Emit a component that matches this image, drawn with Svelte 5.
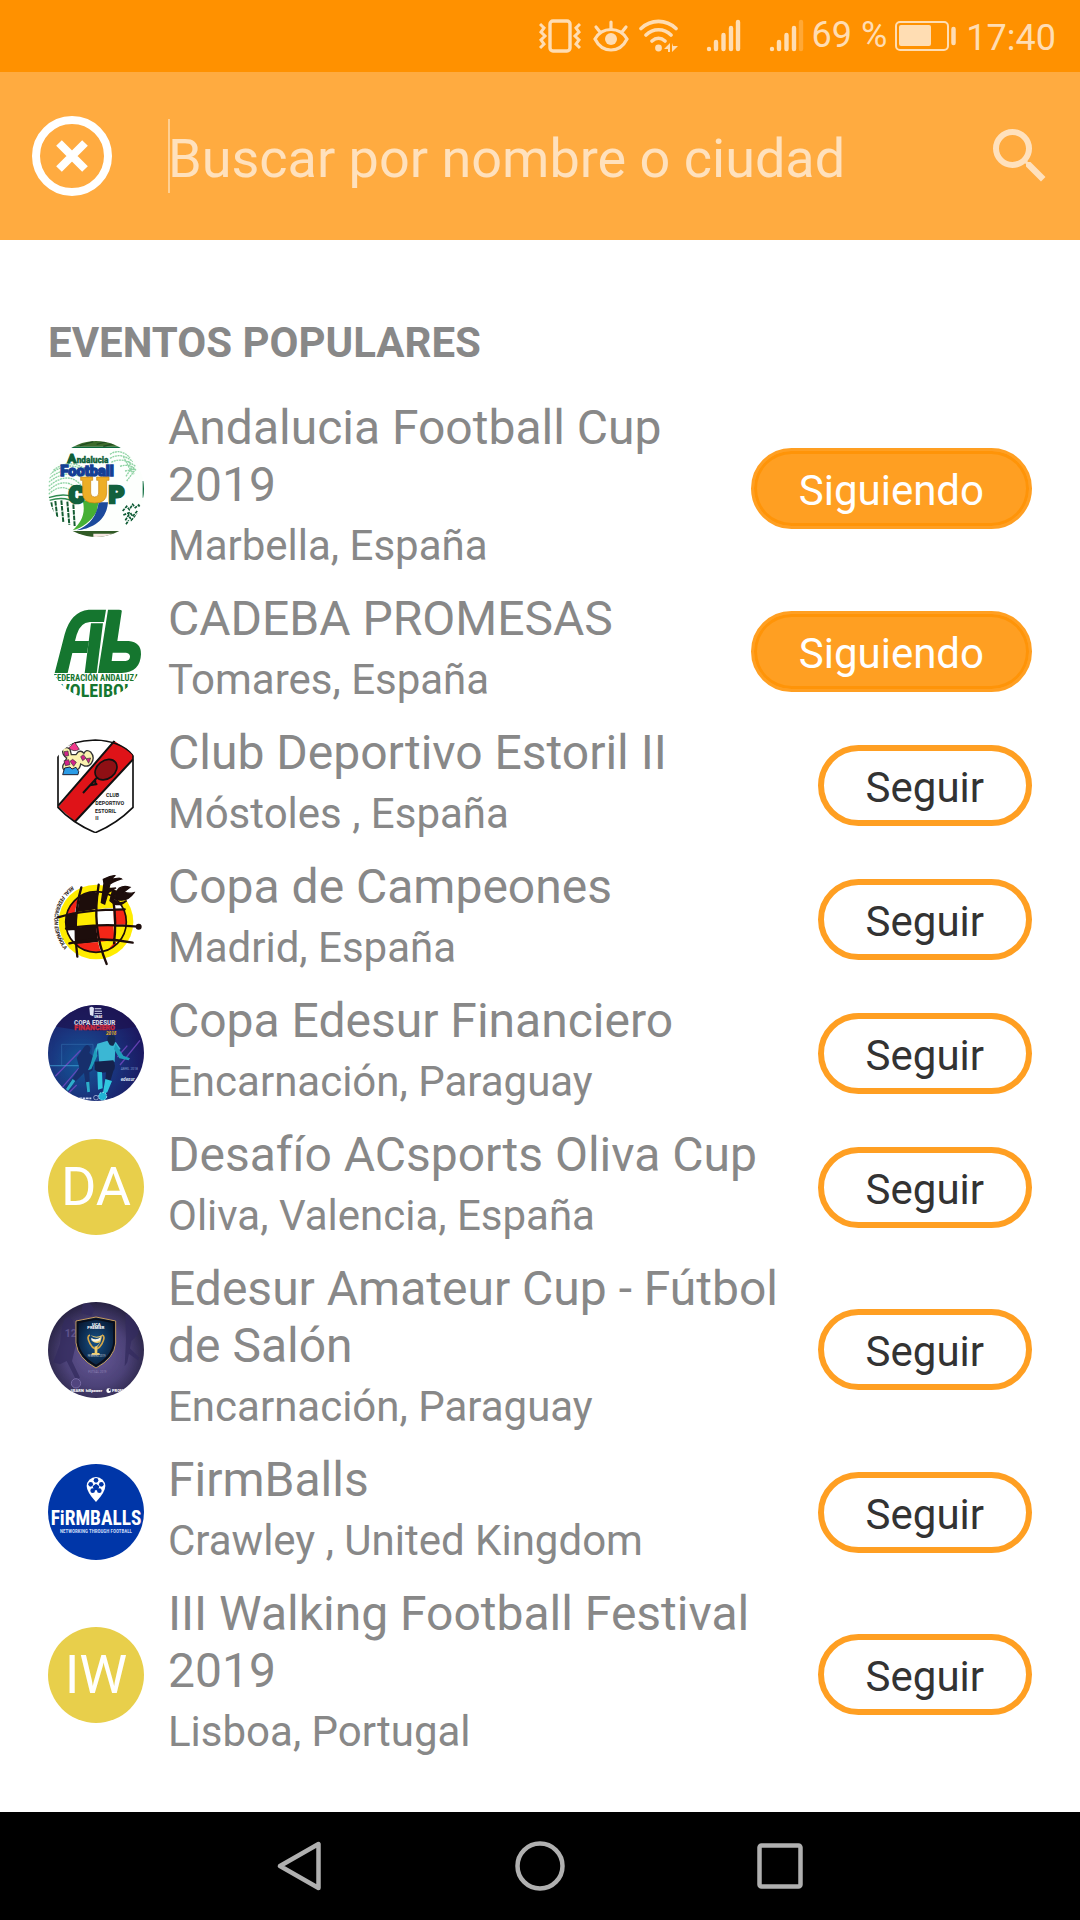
<script>
    let query = $state('');

    let events = $state([
        { name: 'Andalucia Football Cup 2019', place: 'Marbella, España', logo: 'andalucia', following: true },
        { name: 'CADEBA PROMESAS', place: 'Tomares, España', logo: 'cadeba', following: true },
        { name: 'Club Deportivo Estoril II', place: 'Móstoles , España', logo: 'estoril', following: false },
        { name: 'Copa de Campeones', place: 'Madrid, España', logo: 'campeones', following: false },
        { name: 'Copa Edesur Financiero', place: 'Encarnación, Paraguay', logo: 'edesur', following: false },
        { name: 'Desafío ACsports Oliva Cup', place: 'Oliva, Valencia, España', initials: 'DA', following: false },
        { name: 'Edesur Amateur Cup - Fútbol de Salón', place: 'Encarnación, Paraguay', logo: 'amateur', following: false },
        { name: 'FirmBalls', place: 'Crawley , United Kingdom', logo: 'firmballs', following: false },
        { name: 'III Walking Football Festival 2019', place: 'Lisboa, Portugal', initials: 'IW', following: false }
    ]);
</script>

<div class="screen">
    <div class="status">
        <svg class="vibrate" width="42" height="34" viewBox="0 0 42 34" fill="none" stroke="currentColor">
            <rect x="11" y="2" width="20" height="30" rx="3" stroke-width="3.4" />
            <path d="M1 5l4 4-3 4 4 4-4 4 3 4-4 4M41 5l-4 4 3 4-4 4 4 4-3 4 4 4" stroke-width="3" />
        </svg>
        <svg class="eye" width="36" height="34" viewBox="0 0 36 34" fill="none" stroke="currentColor" stroke-width="3.2" stroke-linecap="round">
            <path d="M2 20C6 13 12 10.500 18 10.500S30 13 34 20C30 28 24 31 18 31S6 28 2 20Z" />
            <path d="M18 3v7M3 8l4 5M33 8l-4 5" />
            <circle cx="18" cy="20" r="6" fill="currentColor" stroke="none" />
        </svg>
        <svg class="wifi" width="39" height="34" viewBox="0 0 39 34" fill="none" stroke="currentColor" stroke-width="3.600" stroke-linecap="round">
            <path d="M2 9.500C12 0 27 0 37 9.500M7 16c7-7 18-7 25 0M13 22c4-3.600 9-3.600 13 0" />
            <circle cx="19.500" cy="29" r="3.400" fill="currentColor" stroke="none" />
            <path d="M31 24v9h-2v-3h-4zM33 33v-9l1 3h5z" fill="currentColor" stroke="none" />
        </svg>
        <svg class="signal" width="35" height="34" viewBox="0 0 35 34" stroke="currentColor" stroke-width="4.400" stroke-linecap="round">
            <path d="M3 30v0M10 23v7M17.500 16v14M25 9v21M32 3v27" />
        </svg>
        <svg class="signal" width="35" height="34" viewBox="0 0 35 34" stroke="currentColor" stroke-width="4.400" stroke-linecap="round">
            <path d="M3 30v0M10 23v7M17.500 16v14M25 9v21" />
            <path d="M32 3v27" opacity=".3" />
        </svg>
        <span class="percent">69 %</span>
        <svg class="battery" width="62" height="30" viewBox="0 0 62 30" fill="none" stroke="currentColor">
            <rect x="1" y="1" width="52" height="28" rx="4" stroke-width="2" />
            <rect x="4" y="4" width="32" height="21" rx="2" fill="currentColor" stroke="none" />
            <path d="M58.500 8v14" stroke-width="4.500" stroke-linecap="round" />
        </svg>
        <span class="clock">17:40</span>
    </div>

    <header class="searchbar">
        <button class="close" aria-label="Cerrar" onclick={() => (query = '')}>
            <svg width="80" height="80" viewBox="0 0 80 80" fill="none" stroke="currentColor">
                <circle cx="40" cy="40" r="36" stroke-width="8" />
                <path d="M27 27l26 26M53 27L27 53" stroke-width="8" />
            </svg>
        </button>
        <input type="text" aria-label="Buscar" placeholder="Buscar por nombre o ciudad" bind:value={query} />
        <button class="find" aria-label="Buscar">
            <svg width="72" height="72" viewBox="0 0 24 24" fill="currentColor">
                <path d="M15.500 14h-.79l-.28-.27A6.471 6.471 0 0 0 16 9.500 6.500 6.500 0 1 0 9.500 16c1.610 0 3.090-.59 4.230-1.570l.27.28v.79l5 4.990L20.490 19l-4.990-5zm-6 0C7.010 14 5 11.990 5 9.500S7.010 5 9.500 5 14 7.010 14 9.500 11.990 14 9.500 14z" />
            </svg>
        </button>
    </header>

    <main>
        <h1>EVENTOS POPULARES</h1>
        <ul>
            {#each events as event}
                <li>
                    {#if event.initials}
                        <div class="avatar initials">{event.initials}</div>
                    {:else}
                        <div class="avatar">{@render logo(event.logo)}</div>
                    {/if}
                    <div class="info">
                        <h2>{event.name}</h2>
                        <p>{event.place}</p>
                    </div>
                    <button class="follow" class:following={event.following} onclick={() => (event.following = !event.following)}>
                        {event.following ? 'Siguiendo' : 'Seguir'}
                    </button>
                </li>
            {/each}
        </ul>
    </main>

    <nav>
        <button aria-label="Atrás">
            <svg width="50" height="50" viewBox="0 0 50 50"><path d="M5 25L43.500 3v44z" stroke-linejoin="round" /></svg>
        </button>
        <button aria-label="Inicio">
            <svg width="50" height="50" viewBox="0 0 50 50"><circle cx="25" cy="25" r="22.500" /></svg>
        </button>
        <button aria-label="Recientes">
            <svg width="50" height="50" viewBox="0 0 50 50"><rect x="4.500" y="4.500" width="41" height="41" rx="2" /></svg>
        </button>
    </nav>
</div>

{#snippet logo(kind)}
    {#if kind === 'andalucia'}
        <svg viewBox="54 30 288 288">
            <rect x="54" y="30" width="288" height="288" fill="#fdfffd" />
            <path d="M100 30h200v17H100z" fill="#3c6b2b" />
            <path d="M100 47h200v4H100z" fill="#0b6a3c" />
            <path d="M200 40l30-8M150 44l40-12M220 46l40-10" stroke="#1f4a20" stroke-width="4" />
            <g fill="none" stroke="#8fd3a4" stroke-width="4" stroke-dasharray="6 2">
                <path d="M60 130q60-50 120 0M58 142q60-50 120 0M56 154q60-50 120 0M56 166q60-50 100 0M56 178q50-45 90 0M70 118q50-40 100 0M56 190q40-40 80 0" />
                <path d="M240 70q30-20 60 10M240 82q34-20 68 10M244 94q34-18 72 12M270 106q30-10 48 12M285 120l30-6M288 136l20-30M290 150l26-34M296 90l16 40M280 76l26 50" />
            </g>
            <path d="M56 200q60-20 90 10M58 208q50-15 80 10" fill="none" stroke="#2f8a50" stroke-width="4" />
            <g stroke="#145c32" stroke-width="6" stroke-dasharray="14 3">
                <path d="M76 210l6 50M94 208l6 66M112 212l6 70M130 220l4 66M64 214l4 30" />
            </g>
            <path d="M158 208c10 40-4 66-30 90 30-8 56-28 72-56l6-30z" fill="#46b035" />
            <path d="M206 214c-6 44-30 70-66 84 44-4 90-28 94-84z" fill="#1c4a9c" />
            <g fill="#0c5f38" stroke="#0c5f38" font-weight="900">
                <text x="112" y="97" font-size="40" stroke-width="3">A</text>
                <text x="140" y="97" font-size="25" stroke-width="1">ndalucia</text>
            </g>
            <text x="91" y="136" font-size="44" font-weight="900" fill="#153f94" stroke="#153f94" stroke-width="4">Football</text>
            <g fill="#12603d" stroke="#12603d" stroke-width="8" font-weight="900">
                <text x="116" y="216" font-size="72">C</text>
                <text x="236" y="217" font-size="72">P</text>
            </g>
            <path d="M152 138h36v10h-6v38q0 12 12 12t12-12v-38h-6v-10h37v10h-7v38q0 30-36 30t-36-30v-38h-6z" fill="#eeae26" stroke="#c98512" stroke-width="2" />
            <path d="M278 240l12-14 8 10 10-16 8 10 10-8 4 6M280 252l20-8 8 12 14-16M286 268l10-16 8 16 20-20M288 280l8-12" fill="none" stroke="#0d5a34" stroke-width="5" stroke-dasharray="9 3" />
            <path d="M338 150h4v50h-4z" fill="#0b6a3c" />
            <path d="M100 300h190v18H100z" fill="#315a26" />
            <path d="M190 308h60v10h-60z" fill="#f6e6e2" />
        </svg>
    {:else if kind === 'cadeba'}
        <svg viewBox="54 36 288 288">
            <rect x="54" y="36" width="288" height="288" fill="#fff" />
            <g fill="#15762f">
                <path d="M74 246l30-116q18-68 72-74h52l-6 37h-42q-30 2-40 38l-5 19h42l-6 36h-44l-14 60z" />
                <path d="M183 97h36l-19 149h-36z" />
                <path d="M234 56h42l-14 94h34q38 4 37 40-2 54-58 56h-71zM248 185l-3 25h42q12-2 13-13 0-11-12-12z" fill-rule="evenodd" />
                <text class="narrow" x="198" y="271" font-size="26" font-weight="700" text-anchor="middle">FEDERACIÓN ANDALUZA</text>
                <text class="narrow" x="198" y="318" font-size="54" font-weight="700" text-anchor="middle">VOLEIBOL</text>
            </g>
        </svg>
    {:else if kind === 'estoril'}
        <svg viewBox="54 33 288 288">
            <rect x="54" y="33" width="288" height="288" fill="#fff" />
            <path d="M84 74q40-30 112-32 72 2 113 44v158q-50 50-113 76-70-30-112-76z" fill="#fff" />
            <path d="M252 44l57 40v16L136 287l-51-44z" fill="#df1318" />
            <path d="M85 239L254 44M134 288L309 100" stroke="#111" stroke-width="6" />
            <path d="M84 74q40-30 112-32 72 2 113 44v158q-50 50-113 76-70-30-112-76z" fill="none" stroke="#111" stroke-width="5" />
            <ellipse cx="228" cy="131" rx="36" ry="27" transform="rotate(-38 228 131)" fill="#8f0f14" stroke="#111" stroke-width="5" />
            <path d="M201 155l-42 46M197 178l-2-20M180 178l22-4" stroke="#111" stroke-width="6" />
            <path d="M98 70q10-10 22 0l4 16h14l6-8q10-6 18 4 6-14 20-4 14 16 2 34-6 10-20 8l-12-6q-2 18-18 20h-30q-12-10 0-24l6-14q-14-8-12-26z" fill="#fbf2b0" stroke="#333" stroke-width="4" />
            <path d="M116 66l18-17 14 21q-16 10-32-4z" fill="#f23a8c" stroke="#222" stroke-width="2" />
            <path d="M102 77l12-2 2 14-12 2zM102 104l14-3 4 15-14 3zM120 106l8-6 11 9-8 12zM152 92l8-6 8 10-10 8zM168 98l14-2-6 16z" fill="#d3238a" stroke="#333" stroke-width="2" />
            <path d="M104 126l16-3 6 6 12-5 8 12-2 10H98z" fill="#2a9be6" stroke="#223" stroke-width="3" />
            <g fill="#222" font-size="16" font-weight="700">
                <text x="228" y="214">CLUB</text>
                <text x="196" y="238">DEPORTIVO</text>
                <text x="195" y="261">ESTORIL</text>
                <text x="196" y="282">II</text>
            </g>
        </svg>
    {:else if kind === 'campeones'}
        <svg viewBox="54 33 288 288">
            <defs>
                <clipPath id="ball"><circle cx="198" cy="186" r="91" /></clipPath>
                <path id="ring" d="M126 78A132 132 0 0 0 204 316" />
            </defs>
            <rect x="54" y="33" width="288" height="288" fill="#fff" />
            <circle cx="198" cy="186" r="112" fill="#ffec00" />
            <g clip-path="url(#ball)">
                <rect x="100" y="90" width="200" height="200" fill="#fff" />
                <path d="M100 80l50 10-16 68-34 6zM206 230l50 10 10 40-50 10z" fill="#f52617" />
                <path d="M152 90l56 8-10 50-56 10zM108 162l34-6-6 54-28 2zM134 204l64-8 6 50-66 8z" fill="#1d0d0b" />
                <path d="M142 156l56-8v48l-60 4zM206 100l50-8-6 52-52 4zM250 194l46 6-30 50-14-8z" fill="#ffec00" />
                <path d="M198 148l52-4 2 50-54 2z" fill="#fff" />
                <path d="M250 146l40 4v44h-38zM198 198h52l4 42-50 4zM138 252l66-6 8 30-52 4z" fill="#f52617" />
                <path d="M106 212h28l4 40-30-14z" fill="#fff" />
                <path d="M204 246l56-6-40 44z" fill="#ffec00" />
            </g>
            <circle cx="198" cy="186" r="91" fill="none" stroke="#1d0d0b" stroke-width="5" />
            <g fill="none" stroke="#1d0d0b" stroke-width="7" stroke-linecap="round">
                <path d="M154 82q-26 90-12 208M206 74q-22 130 24 238M250 120q10 70 2 130M84 172q80-24 200-24M108 206q100-18 216-6M118 250q90-22 190-2" />
            </g>
            <circle cx="326" cy="200" r="9" fill="#1d0d0b" />
            <path d="M220 58q20-10 36-12-8 8-14 12 30-6 44-4-30 6-46 18l-4 14 22-2-24 14-10 34-10-4 8-58zM268 84q-26 30 0 36 26 4 44-22-16 4-30-2 10-8 18-14-18-6-32 2zM248 90l12 4-10 24q18 18 40 4-26 24-50 0z" fill="#1d0d0b" stroke="#1d0d0b" stroke-width="4" />
            <text font-size="16" font-weight="700" font-style="italic" fill="#2a1a18"><textPath href="#ring">REAL FEDERACIÓN ESPAÑOLA</textPath></text>
        </svg>
    {:else if kind === 'edesur'}
        <svg viewBox="54 30 288 288">
            <defs>
                <radialGradient id="stage" cx=".35" cy=".6" r=".65">
                    <stop offset="0" stop-color="#145a9a" />
                    <stop offset=".5" stop-color="#1a3780" />
                    <stop offset="1" stop-color="#1c1a62" />
                </radialGradient>
            </defs>
            <rect x="54" y="30" width="288" height="288" fill="url(#stage)" />
            <path d="M54 30h288v60q-140 34-288 0z" fill="#1c1350" opacity=".7" />
            <path d="M95 210v-62h94v60" fill="none" stroke="#3d7cba" stroke-width="2" opacity=".7" />
            <path d="M76 244l76-78M86 290l60-70M270 210l60-74M262 186l30-34M110 300l30-30" stroke="#7549c4" stroke-width="4" opacity=".8" />
            <path d="M54 212h120" stroke="#4bb8e6" stroke-width="4" opacity=".5" />
            <path d="M164 154q12-10 18 6l-4 14 14 12-4 40-10 6 2 50-10 4-8-52-30 30-18 22-8-6 28-40 14-22-8-30z" fill="#172f6c" />
            <path d="M108 282l20-30 8 6-22 30zM168 262l10-2 2 30-8 2z" fill="#2daecb" />
            <path d="M202 146l28-8 28 4 14 20-10 6-6-8-2 40-46 6-4-46-8 30-6-4z" fill="#3bb7d4" />
            <path d="M256 146l24 36 20 8-4 6-28-6-16-28zM196 156l-14 50-8 20 10-4 18-40z" fill="#209ebb" />
            <path d="M232 134q0-14 12-14t12 12-6 20q-12 4-18-18z" fill="#14284d" />
            <path d="M194 200l56-4q10 20 0 32l-10 34-14-4 2-26-20 2-14-10z" fill="#15224d" />
            <path d="M202 230l14 2 2 48-14 4zM226 252l20 6-14 34-14 6z" fill="#31c7df" />
            <circle cx="218" cy="304" r="12" fill="#20b3d5" stroke="#9ce8f5" stroke-width="3" stroke-dasharray="5 4" />
            <path d="M178 38q10-6 14 2l-2 24-10-4zM194 40h20v3h-20zM194 47h22v3h-22zM194 54h22v2h-22z" fill="#dfe5f5" />
            <g font-weight="900">
                <text x="193" y="70" font-size="9" fill="#fff">UNAE</text>
                <text x="132" y="90" font-size="19" fill="#d5d5e3">COPA EDESUR</text>
                <text x="133" y="106" font-size="21" fill="#c72b3e" stroke="#c72b3e">FINANCIERO</text>
                <text x="228" y="119" font-size="14" font-style="italic" fill="#d9a428">2018</text>
            </g>
            <text x="272" y="224" font-size="10" fill="#7b9ad0">ABRIL 2018</text>
            <text x="272" y="258" font-size="14" font-style="italic" font-weight="700" fill="#dfe5f5">edesur</text>
            <circle cx="198" cy="308" r="7" fill="none" stroke="#c8d2ee" stroke-width="2" />
            <path d="M148 310h36" stroke="#c8d2ee" stroke-width="5" stroke-dasharray="8 2" />
        </svg>
    {:else if kind === 'amateur'}
        <svg viewBox="54 33 288 288">
            <defs>
                <radialGradient id="violet" cx=".5" cy=".55" r=".55">
                    <stop offset="0" stop-color="#685a98" />
                    <stop offset=".6" stop-color="#4c4278" />
                    <stop offset="1" stop-color="#282343" />
                </radialGradient>
                <radialGradient id="shield" cx=".5" cy=".5" r=".6">
                    <stop offset="0" stop-color="#17538a" />
                    <stop offset="1" stop-color="#06142c" />
                </radialGradient>
            </defs>
            <rect x="54" y="33" width="288" height="288" fill="url(#violet)" />
            <g fill="#332b5e" opacity=".75">
                <path d="M104 84q14-12 24 4l8 20 2 52-12 50 24 50-12 6-28-56-20 10-20-6 20-56 6-50z" />
                <path d="M158 36q20-10 36 20l-10 20-30-10zM286 70l20-20 28 20-10 60-20 20-12 64-8 12 4-80z" />
                <path d="M298 170l30 30-4 8-34-24z" />
            </g>
            <circle cx="138" cy="277" r="14" fill="#51457f" stroke="#756aa3" stroke-width="3" />
            <text x="104" y="138" font-size="32" font-weight="700" fill="#5d528c">12</text>
            <path d="M198 78q30 6 59 12v66q-4 46-59 75-55-29-60-75V90q30-6 60-12z" fill="url(#shield)" stroke="#c79b5d" stroke-width="3" />
            <path d="M198 84q28 5 54 10v60q-4 42-54 70-50-28-55-70V94z" fill="none" stroke="#0a0d18" stroke-width="5" />
            <g fill="none" stroke="#d7a747" stroke-width="5">
                <path d="M180 132q-12 4 0 26 6 12 16 16M216 132q12 4 0 26-6 12-16 16" />
            </g>
            <path d="M182 132q10 12 30 6-6 12-26 12 12 10 24 4-8 14-16 12v20h-8l-2 6h26l-2-6h-6v-18q12-14 14-36-16 10-34 0z" fill="#f0cd6c" />
            <path d="M184 140q14 10 28-2l-2 10q-14 8-26 0z" fill="#f8f5e6" />
            <g font-weight="900" fill="#fff">
                <text x="186" y="104" font-size="13">UCA</text>
                <text x="172" y="114" font-size="12">PREMIER</text>
                <text x="122" y="304" font-size="12">UEARN</text>
                <text x="167" y="304" font-size="12">hillpower</text>
                <text x="246" y="304" font-size="12">PROM</text>
            </g>
            <text x="173" y="199" font-size="8" fill="#c3cad8">FEBRERO 2019</text>
            <text x="175" y="246" font-size="9" fill="#9186b5">FUTSAL 2019</text>
            <circle cx="236" cy="299" r="7" fill="#fff" />
            <circle cx="239" cy="297" r="3" fill="#2b2648" />
        </svg>
    {:else if kind === 'firmballs'}
        <svg viewBox="54 522 288 288">
            <rect x="54" y="522" width="288" height="288" fill="#0036a8" />
            <path d="M198 636q-28-30-28-48a28 27 0 0 1 56 0q0 18-28 48z" fill="#fff" />
            <g fill="#0036a8">
                <path d="M198 581l10 8-4 12h-12l-4-12z" />
                <circle cx="198" cy="571" r="7" />
                <circle cx="214" cy="583" r="7" />
                <circle cx="208" cy="602" r="7" />
                <circle cx="188" cy="602" r="7" />
                <circle cx="182" cy="583" r="7" />
            </g>
            <text class="narrow" x="198" y="705" font-size="58" font-weight="700" fill="#fff" text-anchor="middle">FiRMBALLS</text>
            <text class="narrow" x="198" y="729" font-size="15" font-weight="700" fill="#c4d5f5" text-anchor="middle">NETWORKING THROUGH FOOTBALL</text>
        </svg>
    {/if}
{/snippet}

<style>
    :global(body) {
        margin: 0;
        background: #fff;
        font-family: Roboto, sans-serif;
    }
    .screen {
        display: flex;
        flex-direction: column;
        min-height: 100vh;
    }
    button {
        padding: 0;
        border: 0;
        background: none;
        color: inherit;
        font-family: inherit;
        cursor: pointer;
    }
    svg {
        display: block;
        flex: none;
    }

    .status {
        display: flex;
        align-items: center;
        justify-content: flex-end;
        height: 72px;
        padding-right: 24px;
        background: #ff9100;
        color: #ffddb3;
        font-size: 36px;
        line-height: 42px;
    }
    .eye {
        margin-left: 12px;
    }
    .wifi {
        margin-left: 10px;
    }
    .signal {
        margin-left: 28px;
    }
    .percent {
        margin: 0 8px 2px;
    }
    .clock {
        margin: 4px 0 0 9px;
    }

    .searchbar {
        display: flex;
        align-items: center;
        height: 168px;
        padding: 0 24px 0 32px;
        box-sizing: border-box;
        background: #ffab40;
    }
    .close {
        color: #fff;
    }
    .find {
        color: #ffe1bd;
    }
    input {
        flex: 1;
        min-width: 0;
        height: 74px;
        margin: 0 24px 0 56px;
        padding: 4px 0 0;
        box-sizing: border-box;
        border: 0;
        outline: 0;
        /* thin caret line at the start of the field */
        background: linear-gradient(#ffd093, #ffd093) left / 2px 100% no-repeat;
        color: #fff;
        font-family: inherit;
        font-size: 54px;
    }
    input::placeholder {
        color: #ffe1bd;
        opacity: 1;
    }

    main {
        flex: 1;
        padding: 78px 48px 40px;
        color: #888;
    }
    h1 {
        margin: 0 0 26px;
        font-size: 42px;
        font-weight: 700;
        line-height: 49px;
    }
    ul {
        margin: 0;
        padding: 0;
        list-style: none;
    }
    li {
        display: flex;
        align-items: center;
    }
    .avatar {
        flex: none;
        width: 96px;
        height: 96px;
        border-radius: 50%;
        overflow: hidden;
    }
    .initials {
        display: flex;
        align-items: center;
        justify-content: center;
        background: #e8cf4b;
        color: #fff;
        font-size: 54px;
        line-height: 64px;
    }
    .narrow {
        font-family: "Roboto Condensed", "Liberation Sans Narrow", Roboto, sans-serif;
    }
    .info {
        flex: 1;
        min-width: 0;
        padding: 6px 0 14px 24px;
    }
    h2 {
        margin: 0 0 8px;
        font-size: 48px;
        font-weight: 400;
        line-height: 57px;
    }
    p {
        margin: 0;
        font-size: 42px;
        line-height: 49px;
    }
    .follow {
        flex: none;
        padding: 12px 42px 8px;
        border: 6px solid #ff9f22;
        border-radius: 41px;
        color: #333;
        font-size: 42px;
        line-height: 49px;
    }
    .following {
        padding: 15px 45px 11px;
        border-width: 3px;
        background: #ff9f22;
        box-shadow: inset 0 0 0 3px #ff9408;
        color: #fff;
    }

    nav {
        display: flex;
        justify-content: center;
        background: #000;
    }
    nav button {
        display: flex;
        align-items: center;
        justify-content: center;
        width: 22.222%;
        height: 108px;
    }
    nav svg {
        fill: none;
        stroke: #b0b0b0;
        stroke-width: 4.500;
    }
</style>
